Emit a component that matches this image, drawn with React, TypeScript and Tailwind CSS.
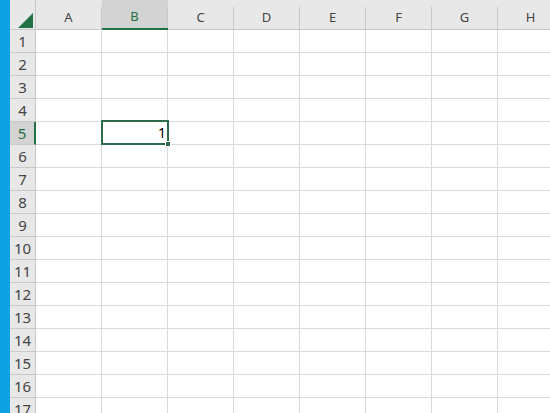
import React from 'react';

const cols = ['A', 'B', 'C', 'D', 'E', 'F', 'G', 'H'];
const rows = Array.from({ length: 17 }, (_, i) => i + 1);

export default function App() {
    return (
        <div className="flex items-start w-[550px] h-[413px] overflow-hidden bg-white font-['Noto_Sans','Noto_Sans_CJK_JP',sans-serif]">
            <div className="w-[10px] h-[413px] shrink-0 bg-[#0ea2e4]" />
            <div className="flex flex-col shrink-0">
                {/* column header */}
                <div className="flex h-[30px] shrink-0 bg-[#e8e8e8] border-b border-[#c8c8c8]">
                    <div className="w-[26px] shrink-0 relative border-r border-[#c8c8c8]">
                        <svg className="absolute left-[8px] top-[13px]" width="15" height="15" viewBox="0 0 15 15">
                            <polygon points="15,0 15,15 0,15" fill="#217346" />
                        </svg>
                    </div>
                    {cols.map((c) => (
                        <div
                            key={c}
                            className={`w-[66px] shrink-0 flex items-end ${c === 'B' ? 'bg-[#d3d3d3] border-b-2 border-[#217346] -mb-px' : ''}`}
                        >
                            <div
                                className={`w-full h-[22px] flex items-center justify-center text-[13px] border-r border-[#c8c8c8] ${c === 'B' ? 'text-[#217346]' : 'text-[#444]'}`}
                            >
                                {c}
                            </div>
                        </div>
                    ))}
                </div>
                {rows.map((r) => (
                    <div key={r} className="flex h-[23px] shrink-0">
                        <div
                            className={`w-[26px] shrink-0 flex items-center justify-center text-[15px] border-b border-[#c8c8c8] ${r === 5 ? 'bg-[#d3d3d3] border-r-2 border-r-[#217346] text-[#217346]' : 'bg-[#e8e8e8] border-r border-r-[#c8c8c8] text-[#444]'}`}
                        >
                            {r}
                        </div>
                        {cols.map((c) => (
                            <div key={c} className="w-[66px] shrink-0 relative border-r border-b border-[#dadada]">
                                {r === 5 && c === 'B' && (
                                    <div className="absolute -left-[1px] -top-[2px] w-[68px] h-[25px] border-2 border-[#2f6b4b] flex items-center justify-end pr-[1px] text-[14px] text-black z-10">
                                        1
                                        <div className="absolute -right-[4px] -bottom-[4px] w-[6px] h-[6px] bg-[#2f6b4b] border border-white" />
                                    </div>
                                )}
                            </div>
                        ))}
                    </div>
                ))}
            </div>
        </div>
    );
}
